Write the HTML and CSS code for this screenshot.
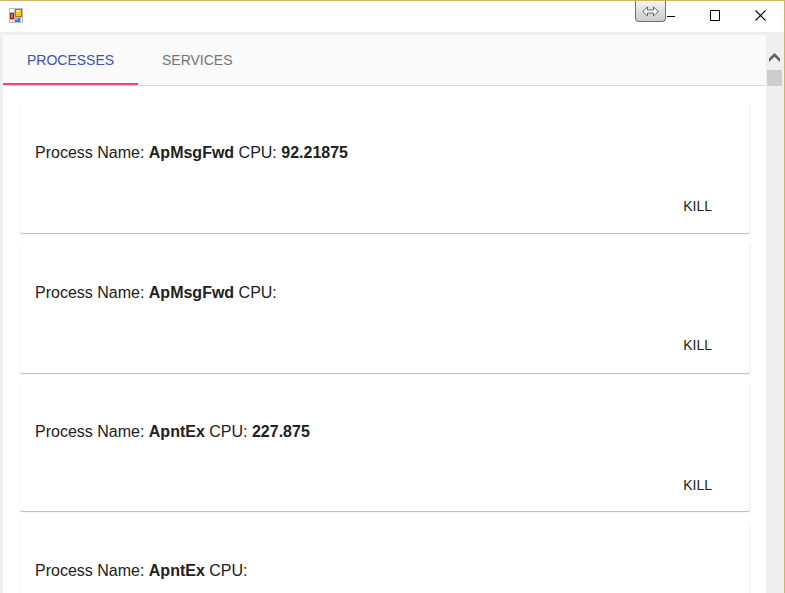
FILE: index.html
```
<!DOCTYPE html>
<html lang="en">
<head>
<meta charset="utf-8">
<title>Processes</title>
<link rel="stylesheet" href="styles.css">
</head>
<body>
<div class="window">
  <header class="titlebar">
    <svg class="app-icon" width="14" height="15" viewBox="0 0 14 15" shape-rendering="crispEdges">
      <path fill="#bcbcbc" d="M0 0h14v15H0z"/>
      <path fill="#fff" d="M1 1h4v3H1zM1 12h2v2H1zM4 12h1v2H4zM12 10h1v4h-1z"/>
      <path fill="#9c1a12" d="M1 5h4v6H1z"/><path fill="#e46a58" d="M2 6h2v4H2z"/>
      <path fill="#a87a08" d="M6 1h7v8H6z"/><path fill="#f8c51c" d="M7 2h5v6H7z"/><path fill="#ffe88a" d="M7 2h4v2H7z"/>
      <path fill="#3f78cc" d="M6 10h5v4H6z"/><path fill="#8ab8f4" d="M6 10h3v2H6z"/>
    </svg>
    <div class="resize-handle">
      <svg width="17" height="11" viewBox="0 0 17 11"><path d="M.7 5.5 5.5 1v3h6V1l4.800 4.500-4.800 4.500V7h-6v3z" fill="#fff" stroke="#666"/></svg>
    </div>
    <div class="controls">
      <svg width="8" height="11" viewBox="0 0 8 11"><path d="M0 6.500h8" stroke="#000"/></svg>
      <svg width="11" height="11" viewBox="0 0 11 11"><path d="M.5.5h9v10h-9z" fill="none" stroke="#000"/></svg>
      <svg class="close" width="11" height="11" viewBox="0 0 11 11"><path d="M.5.5l10 10M10.500.5l-10 10" stroke="#000" stroke-width="1.100"/></svg>
    </div>
  </header>
  <div class="client">
    <main class="page">
      <nav class="tabs"><a class="tab active">PROCESSES</a><a class="tab">SERVICES</a></nav>
      <div class="list">
        <section class="card"><p>Process Name: <b>ApMsgFwd</b> CPU: <b>92.21875</b></p><button>KILL</button></section>
        <section class="card"><p>Process Name: <b>ApMsgFwd</b> CPU:</p><button>KILL</button></section>
        <section class="card short"><p>Process Name: <b>ApntEx</b> CPU: <b>227.875</b></p><button>KILL</button></section>
        <section class="card"><p>Process Name: <b>ApntEx</b> CPU:</p></section>
      </div>
    </main>
    <aside class="scrollbar">
      <svg width="11" height="10" viewBox="0 0 11 10"><path d="M0 5.500 5.500 0 11 5.500V9L5.500 3.800 0 9z" fill="#606060"/></svg>
      <div class="thumb"></div>
    </aside>
  </div>
</div>
</body>
</html>
```
FILE: styles.css
```
* { box-sizing: border-box; }
body { margin: 0; overflow: hidden; font-family: "Liberation Sans", Arial, sans-serif; }
.window { height: 593px; display: flex; flex-direction: column; border-top: 1px solid #d0b45c; border-right: 1px solid #d0b45c; background: #fff; }
.titlebar { position: relative; height: 31px; flex: none; display: flex; justify-content: space-between; padding: 7px 18px 0 9px; }
.app-icon { display: block; }
.resize-handle { position: absolute; left: 635px; top: 0; width: 31px; height: 21px; border: 1px solid #707070; border-top: 0; border-radius: 0 0 4px 4px; background: linear-gradient(#f4f4f4, #e2e2e2 45%, #cdcdcd); display: flex; justify-content: center; padding-top: 5px; }
.resize-handle svg { display: block; }
.controls { display: flex; padding-top: 2px; }
.controls svg { display: block; }
.controls svg + svg { margin-left: 35px; }
.controls svg.close { margin-left: 34px; }
.client { flex: 1; min-height: 0; display: flex; padding: 3px 0 0 3px; background: #efefef; }
.page { width: 763px; background: #fff; overflow: hidden; }
.tabs { display: flex; height: 51px; background: #fafafa; border-bottom: 1px solid #d9d9d9; }
.tab { height: 50px; padding: 0 24px; line-height: 50px; font-size: 14px; color: #737373; }
.tab.active { width: 135px; color: #3f51b5; border-bottom: 2px solid #ff4081; }
.list { padding: 17px 16px 0 17px; display: flex; flex-direction: column; gap: 10px; }
.card { height: 130px; flex: none; padding: 40px 15px 0; border-radius: 2px; background: #fff; border-right: 1px solid #f3f3f3; box-shadow: 0 1px 1px rgba(0,0,0,.27); display: flex; flex-direction: column; align-items: flex-start; }
.card.short { height: 128px; padding-top: 39px; }
.card p { margin: 0; font-size: 16px; line-height: 20px; color: #212121; white-space: nowrap; }
.card button { align-self: flex-end; margin: 33px 22px 0 0; padding: 0; border: 0; background: none; font: 14px/20px "Liberation Sans", Arial, sans-serif; color: #212121; }
.card:nth-child(2) button { margin-top: 32px; }
.scrollbar { flex: 1; background: #efefef; display: flex; flex-direction: column; align-items: flex-start; padding: 18px 0 0 3px; }
.scrollbar svg { display: block; }
.thumb { width: 15px; height: 16px; margin: 7px 0 0 -2px; background: #cdcdcd; }
```
